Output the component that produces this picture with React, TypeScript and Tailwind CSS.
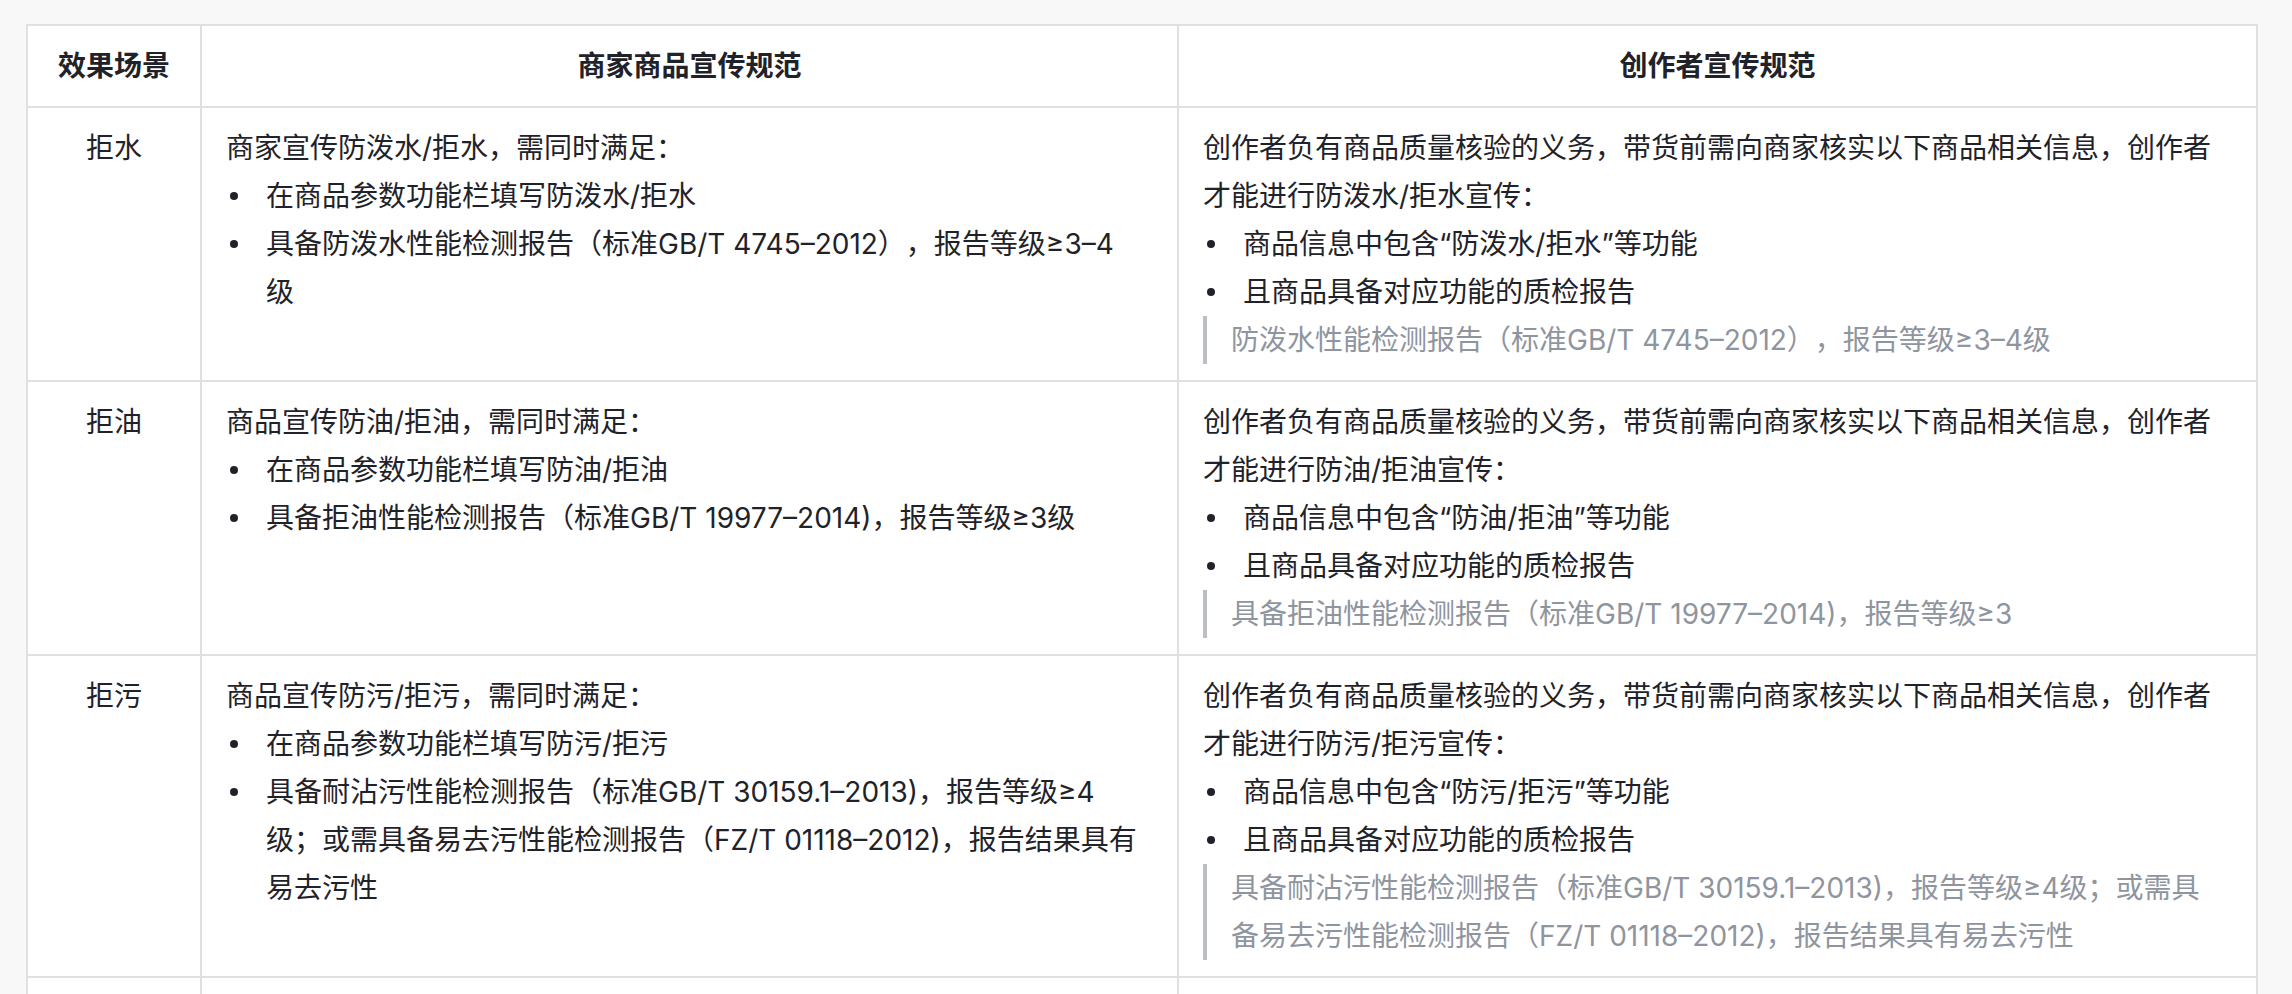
import React from "react";

type Cell = {
  intro: string[];
  bullets: string[][];
  quote?: string[];
};

type Row = {
  scene: string;
  merchant: Cell;
  creator: Cell;
};

const rows: Row[] = [
  {
    scene: "拒水",
    merchant: {
      intro: ["商家宣传防泼水/拒水，需同时满足："],
      bullets: [
        ["在商品参数功能栏填写防泼水/拒水"],
        ["具备防泼水性能检测报告（标准GB/T 4745–2012），报告等级≥3–4", "级"],
      ],
    },
    creator: {
      intro: [
        "创作者负有商品质量核验的义务，带货前需向商家核实以下商品相关信息，创作者",
        "才能进行防泼水/拒水宣传：",
      ],
      bullets: [["商品信息中包含“防泼水/拒水”等功能"], ["且商品具备对应功能的质检报告"]],
      quote: ["防泼水性能检测报告（标准GB/T 4745–2012），报告等级≥3–4级"],
    },
  },
  {
    scene: "拒油",
    merchant: {
      intro: ["商品宣传防油/拒油，需同时满足："],
      bullets: [
        ["在商品参数功能栏填写防油/拒油"],
        ["具备拒油性能检测报告（标准GB/T 19977–2014)，报告等级≥3级"],
      ],
    },
    creator: {
      intro: [
        "创作者负有商品质量核验的义务，带货前需向商家核实以下商品相关信息，创作者",
        "才能进行防油/拒油宣传：",
      ],
      bullets: [["商品信息中包含“防油/拒油”等功能"], ["且商品具备对应功能的质检报告"]],
      quote: ["具备拒油性能检测报告（标准GB/T 19977–2014)，报告等级≥3"],
    },
  },
  {
    scene: "拒污",
    merchant: {
      intro: ["商品宣传防污/拒污，需同时满足："],
      bullets: [
        ["在商品参数功能栏填写防污/拒污"],
        [
          "具备耐沾污性能检测报告（标准GB/T 30159.1–2013)，报告等级≥4",
          "级；或需具备易去污性能检测报告（FZ/T 01118–2012)，报告结果具有",
          "易去污性",
        ],
      ],
    },
    creator: {
      intro: [
        "创作者负有商品质量核验的义务，带货前需向商家核实以下商品相关信息，创作者",
        "才能进行防污/拒污宣传：",
      ],
      bullets: [["商品信息中包含“防污/拒污”等功能"], ["且商品具备对应功能的质检报告"]],
      quote: [
        "具备耐沾污性能检测报告（标准GB/T 30159.1–2013)，报告等级≥4级；或需具",
        "备易去污性能检测报告（FZ/T 01118–2012)，报告结果具有易去污性",
      ],
    },
  },
];

const Lines = ({ lines }: { lines: string[] }) => (
  <>
    {lines.map((line, i) => (
      <div key={i} className="whitespace-nowrap">
        {line}
      </div>
    ))}
  </>
);

const CellBody = ({ cell }: { cell: Cell }) => (
  <div>
    <Lines lines={cell.intro} />
    <ul>
      {cell.bullets.map((b, i) => (
        <li key={i} className="flex">
          <span className="w-10 shrink-0 h-12 flex items-center">
            <span className="ml-1 w-2 h-2 rounded-full bg-[#1f2329]" />
          </span>
          <span>
            <Lines lines={b} />
          </span>
        </li>
      ))}
    </ul>
    {cell.quote && (
      <div className="border-l-4 border-[#bbbfc4] pl-6 text-[#8f959e]">
        <Lines lines={cell.quote} />
      </div>
    )}
  </div>
);

const cellCls = "border-r-2 border-b-2 border-[#dee0e3] px-6 py-4 bg-white";

export default function App() {
  return (
    <div
      className="min-h-screen bg-[#f8f8f8] pt-6 pl-[26px] text-[28px] leading-[48px] text-[#1f2329] [text-spacing-trim:space-all]"
      style={{ fontFamily: 'Inter, "Noto Sans CJK SC", sans-serif' }}
    >
      <div className="grid grid-cols-[174px_977px_1079px] w-[2232px] border-l-2 border-t-2 border-[#dee0e3]">
        <div className={`${cellCls} text-center font-semibold`}>效果场景</div>
        <div className={`${cellCls} text-center font-semibold`}>商家商品宣传规范</div>
        <div className={`${cellCls} text-center font-semibold`}>创作者宣传规范</div>

        {rows.map((row) => (
          <React.Fragment key={row.scene}>
            <div className={`${cellCls} text-center`}>{row.scene}</div>
            <div className={cellCls}>
              <CellBody cell={row.merchant} />
            </div>
            <div className={cellCls}>
              <CellBody cell={row.creator} />
            </div>
          </React.Fragment>
        ))}

        <div className={`${cellCls} h-[120px]`} />
        <div className={`${cellCls} h-[120px]`} />
        <div className={`${cellCls} h-[120px]`} />
      </div>
    </div>
  );
}
